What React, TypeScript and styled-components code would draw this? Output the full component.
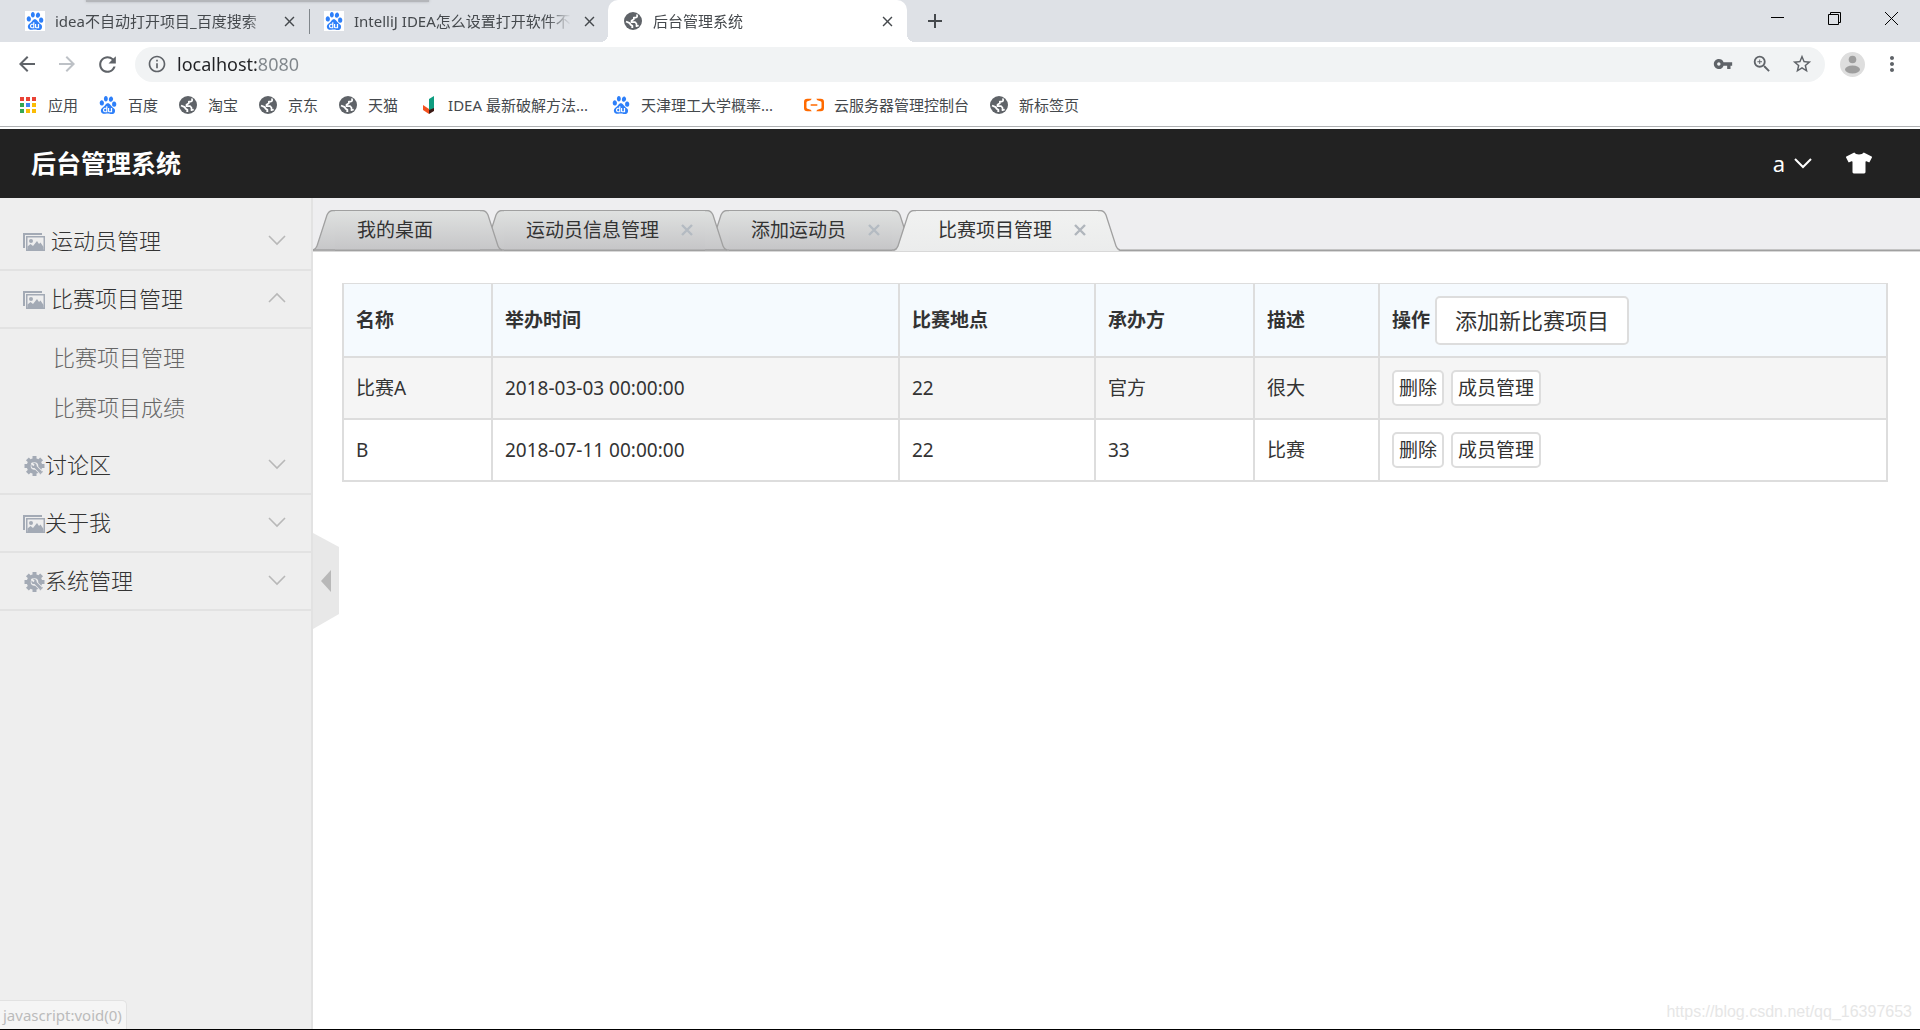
import React from 'react';
import styled, { createGlobalStyle } from 'styled-components';
import {
  MdArrowBack,
  MdArrowForward,
  MdClose,
  MdInfoOutline,
  MdMoreVert,
  MdRefresh,
  MdStarBorder,
  MdVpnKey,
  MdZoomIn,
  MdAdd,
} from 'react-icons/md';
import { SiAlibabacloud, SiBaidu } from 'react-icons/si';
import { FaTshirt } from 'react-icons/fa';

const sans = `'Noto Sans', 'Noto Sans CJK SC', sans-serif`;

const GlobalStyle = createGlobalStyle`
  *, *::before, *::after { box-sizing: border-box; }
  body { margin: 0; background: #fff; color: #333; font-family: ${sans}; }
  button, input { font: inherit; color: inherit; }
  button { padding: 0; border: 0; background: none; cursor: pointer; }
  a { color: inherit; text-decoration: none; }
  svg { display: block; flex: none; }
`;

const Screen = styled.div`
  position: relative;
  display: flex;
  flex-direction: column;
  height: 100vh;
  overflow: hidden;
  border-bottom: 1px solid #000;
`;

/* ---------- browser window ---------- */

const TabStrip = styled.div`
  position: relative;
  display: flex;
  height: 42px;
  background: #dee1e6;
  color: #45494d;
`;

const WindowShadow = styled.div`
  position: absolute;
  left: 86px;
  top: -4px;
  width: 343px;
  height: 6px;
  background: #b4b6ba;
  box-shadow: 0 0 3px #b4b6ba;
`;

const BrowserTab = styled.div<{ $active?: boolean; $divider?: boolean }>`
  position: relative;
  display: flex;
  align-items: center;
  gap: 10px;
  width: 299px;
  padding: 0 11px 0 15px;
  border-radius: 10px 10px 0 0;
  font-size: 15px;
  background: ${p => (p.$active ? '#fff' : 'transparent')};

  ${p =>
    p.$divider &&
    `&::after {
      content: '';
      position: absolute;
      right: -1px;
      top: 9px;
      width: 1px;
      height: 25px;
      background: #80868b;
    }`}

  ${p =>
    p.$active &&
    `&::before, &::after {
      content: '';
      position: absolute;
      bottom: 0;
      width: 8px;
      height: 8px;
    }
    &::before { left: -8px; background: radial-gradient(circle at 0 0, transparent 8px, #fff 8px); }
    &::after { right: -8px; background: radial-gradient(circle at 100% 0, transparent 8px, #fff 8px); }`}
`;

const TabLabel = styled.span`
  flex: 1;
  white-space: nowrap;
  line-height: 24px;
  mask-image: linear-gradient(90deg, #000 calc(100% - 24px), transparent);
`;

const Tabs = styled.div`
  display: flex;
  padding-left: 10px;
`;

const Favicon = styled.span<{ $plain?: boolean }>`
  display: grid;
  place-items: center;
  width: 20px;
  height: 20px;
  flex: none;
  background: ${p => (p.$plain ? 'none' : '#fff')};
`;

const IconButton = styled.button`
  display: grid;
  place-items: center;
  flex: none;
`;

const NewTab = styled(IconButton)`
  margin-left: 16px;
`;

const WindowButtons = styled.div`
  display: flex;
  margin-left: auto;
`;

const WindowButton = styled(IconButton)`
  width: 57px;
  height: 37px;
  color: #000;
`;

const Toolbar = styled.div`
  display: flex;
  align-items: center;
  height: 44px;
  padding: 0 16px 0 15px;
  color: #5f6368;
`;

const NavButtons = styled.div`
  display: flex;
  gap: 16px;
  padding-right: 15px;
`;

const Omnibox = styled.div`
  display: flex;
  align-items: center;
  flex: 1;
  height: 35px;
  padding: 0 12px;
  border-radius: 18px;
  background: #f1f3f4;
`;

const Address = styled.input`
  flex: 1;
  min-width: 0;
  margin-left: 10px;
  padding: 0;
  border: 0;
  outline: 0;
  font-size: 18px;
  color: #202124;
  background: linear-gradient(90deg, #202124 80px, #80868b 80px);
  -webkit-background-clip: text;
  background-clip: text;
  -webkit-text-fill-color: transparent;
`;

const OmniActions = styled.div`
  display: flex;
  gap: 18px;
`;

const Avatar = styled(IconButton)`
  margin: 0 15px;
`;

const BookmarkBar = styled.nav`
  display: flex;
  align-items: center;
  gap: 20px;
  height: 43px;
  padding: 0 18px 4px;
  border-bottom: 2px solid #fff;
  box-shadow: inset 0 -1px #b0b2b4;
  font-size: 15px;
  color: #45494d;
`;

const Bookmark = styled.a<{ $clipped?: boolean }>`
  display: flex;
  align-items: center;
  gap: 10px;
  width: ${p => (p.$clipped ? '173px' : 'auto')};
  white-space: nowrap;
`;

/* ---------- application ---------- */

const Header = styled.header`
  display: flex;
  align-items: center;
  justify-content: space-between;
  height: 69px;
  flex: none;
  padding: 0 48px 2px 31px;
  background: #222;
  color: #fff;
`;

const Title = styled.h1`
  margin: 0;
  font-size: 25px;
  line-height: 36px;
`;

const HeaderTools = styled.div`
  display: flex;
  align-items: center;
  gap: 34px;
`;

const UserButton = styled.button`
  display: flex;
  align-items: center;
  gap: 9px;
  font-size: 22px;
  line-height: 30px;
`;

const Workspace = styled.div`
  display: flex;
  flex: 1;
  min-height: 0;
`;

const Sidebar = styled.nav`
  width: 313px;
  flex: none;
  padding-top: 15px;
  border-right: 2px solid #e2e2e2;
  background: #eee;
  font-size: 22px;
  font-weight: 300;
`;

const MenuItem = styled.button<{ $spaced?: boolean }>`
  display: flex;
  align-items: center;
  width: 100%;
  height: 58px;
  padding: 0 25px 2px 23px;
  border-bottom: 2px solid #e2e2e2;
  text-align: left;

  span {
    flex: 1;
    padding: 0 0 2px ${p => (p.$spaced ? '6px' : '0')};
  }
`;

const MenuIcon = styled.i`
  padding-top: 4px;
`;

const SubMenu = styled.div`
  display: flex;
  flex-direction: column;
  padding: 3px 0 5px 53px;
  color: #666;
`;

const SubLink = styled.a`
  line-height: 50px;
`;

const Main = styled.main`
  position: relative;
  flex: 1;
  min-width: 0;
`;

const PageTabs = styled.div`
  display: flex;
  align-items: flex-end;
  height: 54px;
  background: linear-gradient(#eeeef0 51px, #c4c4c4 51px 52px, #a0a0a0 52px 53px, #d8d8d8 53px);
`;

const PageTab = styled.div`
  position: relative;
  display: flex;
  height: 42px;
  margin-right: -20px;
  font-size: 19px;
`;

const TabBody = styled.div<{ $active?: boolean; $closable: boolean }>`
  display: flex;
  align-items: center;
  gap: 22px;
  height: 42px;
  padding: 0 ${p => (p.$closable ? '12px' : '47px')} 3px 22px;
  border-top: 1px solid #a0a0a0;
  background: ${p =>
    p.$active
      ? 'linear-gradient(#f1f2f1, #ebecec 40px, #d8d8d8 40px)'
      : 'linear-gradient(#dfe1e0, #c6c6c8 38px, #a0a0a0 39px, #a0a0a0 40px, #d8d8d8 40px)'};
`;

const TabButton = styled.button`
  line-height: 28px;
  white-space: nowrap;
`;

const Content = styled.section`
  padding: 31px 32px 31px 29px;
`;

const Table = styled.table`
  width: 100%;
  table-layout: fixed;
  border-collapse: separate;
  border-spacing: 0;
  border-top: 1px solid #ddd;
  border-left: 2px solid #ddd;
  font-size: 19px;
  line-height: 28px;
`;

const Col = styled.col<{ $w?: number }>`
  width: ${p => (p.$w ? `${p.$w}px` : 'auto')};
`;

const Row = styled.tr<{ $shade?: boolean }>`
  background: ${p => (p.$shade ? '#f5f5f5' : '#fff')};
`;

const HeadCell = styled.th`
  height: 74px;
  padding: 0 12px;
  border-right: 2px solid #ddd;
  border-bottom: 2px solid #ddd;
  background: #f5fafe;
  text-align: left;
`;

const Cell = styled.td`
  height: 62px;
  padding: 0 12px;
  border-right: 2px solid #ddd;
  border-bottom: 2px solid #ddd;
`;

const Actions = styled.div<{ $tight?: boolean }>`
  display: flex;
  align-items: center;
  gap: ${p => (p.$tight ? '5px' : '7px')};
`;

const OutlineButton = styled.button<{ $large?: boolean }>`
  height: ${p => (p.$large ? '49px' : '36px')};
  padding: 0 ${p => (p.$large ? '18px' : '5px')};
  border: 2px solid #ddd;
  border-radius: 5px;
  background: #fff;
  font-size: ${p => (p.$large ? '22px' : '19px')};
  font-weight: 400;
  line-height: 28px;
  white-space: nowrap;
`;

const Collapse = styled.button`
  position: absolute;
  left: 0;
  top: 335px;
`;

const StatusBubble = styled.div`
  position: absolute;
  left: 0;
  bottom: 0;
  padding: 2px 4px 1px 3px;
  border: solid #e2e2e2;
  border-width: 1px 1px 0 0;
  border-radius: 0 5px 0 0;
  background: #f5f5f5;
  color: #bbb;
  font-size: 15px;
  line-height: 25px;
`;

const Watermark = styled.div`
  position: absolute;
  right: 8px;
  bottom: 6px;
  font: 16px/22px 'Liberation Sans', sans-serif;
  color: #e6e6e6;
`;

/* ---------- drawings ---------- */

const Chevron = ({ up, color = '#b8b8b8', width = 1.6 }: { up?: boolean; color?: string; width?: number }) => (
  <svg width="18" height="12" viewBox="0 0 18 12" fill="none" stroke={color} strokeWidth={width}>
    <path d={up ? 'M1 10 9 2l8 8' : 'M1 2l8 8 8-8'} />
  </svg>
);

const PictureIcon = () => (
  <svg width="22" height="18" viewBox="0 0 22 18" fill="#a3aab5">
    <path d="M0 0h19v2H2v13H0z" />
    <path fillRule="evenodd" d="M3 3h19v15H3zM4.500 4.500v12h16v-12z" />
    <circle cx="8" cy="8" r="2" />
    <path d="M4.500 17v-3.500l3-2.500 2.500 2 4-5 2 3 1.500-1.500 3 4.500v3z" />
  </svg>
);

const GearIcon = () => (
  <svg width="22" height="20" viewBox="0 0 22 20" fill="none">
    <circle cx="11.500" cy="10" r="5.800" stroke="#a3aab5" strokeWidth="4" />
    <g stroke="#a3aab5" strokeWidth="4">
      <path d="M11.500 0v4M11.500 16v4M1.500 10h4M17.500 10h4M4.400 2.900l3 3M15.600 14.100l3 3M4.400 17.100l3-3M15.600 5.900l3-3" />
    </g>
    <path d="M11 9.500l7 7" stroke="#eee" strokeWidth="4.400" />
    <path d="M11 9.500l7 7" stroke="#a3aab5" strokeWidth="2.800" />
    <circle cx="11" cy="9.500" r="2.600" fill="#a3aab5" />
    <path d="M8.500 7l2.500 2.500" stroke="#eee" strokeWidth="1.800" />
  </svg>
);

const AppsIcon = () => (
  <svg width="16" height="16" viewBox="0 0 16 16">
    {['#ea4335', '#ea4335', '#ea4335', '#34a853', '#4285f4', '#fbbc05', '#34a853', '#fbbc05', '#fbbc05'].map((c, i) => (
      <rect key={i} x={(i % 3) * 6} y={Math.floor(i / 3) * 6} width="4" height="4" fill={c} />
    ))}
  </svg>
);

const BookIcon = () => (
  <svg width="13" height="18" viewBox="0 0 13 18">
    <path d="M7 3l5-3v13l-5 3z" fill="#0f9d80" />
    <path d="M1 9l6 4v5l-6-4z" fill="#f4511e" />
    <path d="M7 14l5-2v3l-5 3z" fill="#3c1a14" />
  </svg>
);

const Baidu = () => <SiBaidu size={18} color="#2d7ff9" />;

const Globe = () => (
  <svg width="18" height="18" viewBox="0 0 18 18">
    <circle cx="9" cy="9" r="9" fill="#5f6368" />
    <g fill="none" stroke="#fff" strokeLinejoin="round">
      <path d="M12.500 2.500c1.500 1.500.5 3-1 3.200H9.800v1.600L7.500 8.800v1.400h3.700l1.300 1.500v2.500l2.200-.7" strokeWidth="1.700" />
      <path d="M2 9.500l3.700 1.700 1 1.600 1.600 1v2.200" strokeWidth="1.900" />
    </g>
  </svg>
);

const TabCap = ({ active, right }: { active?: boolean; right?: boolean }) => {
  const id = `cap-${active ? 'on' : 'off'}-${right ? 'r' : 'l'}`;
  return (
    <svg width="22" height="42" viewBox="0 0 22 42">
      <defs>
        <linearGradient id={id} x1="0" y1="0" x2="0" y2="1">
          <stop offset="0" stopColor={active ? '#f1f2f1' : '#dfe1e0'} />
          <stop offset="1" stopColor={active ? '#ebecec' : '#c6c6c8'} />
        </linearGradient>
      </defs>
      <g transform={right ? 'translate(22 0) scale(-1 1)' : undefined}>
        <path d="M0 41Q3 40 4 37L14 5Q16 .5 20 .5H22V41z" fill={`url(#${id})`} />
        <path d="M0 40Q3 39 4 36L14 5Q16 .5 20 .5H22" fill="none" stroke="#a0a0a0" strokeWidth="1.300" />
        {active ? null : <path d="M0 40H22" stroke="#a0a0a0" strokeWidth="1.500" />}
        <path d="M0 41.500H22" stroke="#d8d8d8" />
      </g>
    </svg>
  );
};

const CloseMark = ({ active }: { active?: boolean }) => (
  <svg width="12" height="12" viewBox="0 0 12 12" stroke={active ? '#b0b6bc' : '#b4bbc2'} strokeWidth="2.400">
    <path d="M1 1l10 10M11 1L1 11" />
  </svg>
);

/* ---------- data ---------- */

const bookmarks = [
  { label: '应用', icon: <AppsIcon /> },
  { label: '百度', icon: <Baidu /> },
  { label: '淘宝', icon: <Globe /> },
  { label: '京东', icon: <Globe /> },
  { label: '天猫', icon: <Globe /> },
  { label: 'IDEA 最新破解方法...', icon: <BookIcon />, clipped: true },
  { label: '天津理工大学概率...', icon: <Baidu />, clipped: true },
  { label: '云服务器管理控制台', icon: <SiAlibabacloud size={20} color="#ff6a00" /> },
  { label: '新标签页', icon: <Globe /> },
];

const menu = [
  { label: '运动员管理', icon: <PictureIcon />, spaced: true },
  {
    label: '比赛项目管理',
    icon: <PictureIcon />,
    spaced: true,
    children: ['比赛项目管理', '比赛项目成绩'],
  },
  { label: '讨论区', icon: <GearIcon /> },
  { label: '关于我', icon: <PictureIcon /> },
  { label: '系统管理', icon: <GearIcon /> },
];

const pageTabs = [
  { label: '我的桌面', closable: false },
  { label: '运动员信息管理', closable: true },
  { label: '添加运动员', closable: true },
  { label: '比赛项目管理', closable: true, active: true },
];

const columns = ['名称', '举办时间', '比赛地点', '承办方', '描述'];
const widths = [149, 407, 196, 159, 125];

const events = [
  ['比赛A', '2018-03-03 00:00:00', '22', '官方', '很大'],
  ['B', '2018-07-11 00:00:00', '22', '33', '比赛'],
];

export default function App() {
  return (
    <Screen>
      <GlobalStyle />
      <TabStrip>
        <WindowShadow />
        <Tabs>
          <BrowserTab $divider>
            <Favicon><Baidu /></Favicon>
            <TabLabel>idea不自动打开项目_百度搜索</TabLabel>
            <IconButton aria-label="关闭标签页"><MdClose size={17} /></IconButton>
          </BrowserTab>
          <BrowserTab>
            <Favicon><Baidu /></Favicon>
            <TabLabel>IntelliJ IDEA怎么设置打开软件不</TabLabel>
            <IconButton aria-label="关闭标签页"><MdClose size={17} /></IconButton>
          </BrowserTab>
          <BrowserTab $active>
            <Favicon $plain><Globe /></Favicon>
            <TabLabel>后台管理系统</TabLabel>
            <IconButton aria-label="关闭标签页"><MdClose size={17} /></IconButton>
          </BrowserTab>
        </Tabs>
        <NewTab aria-label="新标签页"><MdAdd size={24} /></NewTab>
        <WindowButtons>
          <WindowButton aria-label="最小化">
            <svg width="13" height="13" stroke="currentColor"><path d="M0 5.500h13" /></svg>
          </WindowButton>
          <WindowButton aria-label="还原">
            <svg width="13" height="13" fill="none" stroke="currentColor">
              <path d="M.5 2.500h10v10H.5zM2.500 2.500v-2h10v10h-2" />
            </svg>
          </WindowButton>
          <WindowButton aria-label="关闭">
            <svg width="13" height="13" stroke="currentColor"><path d="M0 0l13 13M13 0L0 13" /></svg>
          </WindowButton>
        </WindowButtons>
      </TabStrip>

      <Toolbar>
        <NavButtons>
          <IconButton aria-label="后退"><MdArrowBack size={24} /></IconButton>
          <IconButton aria-label="前进"><MdArrowForward size={24} color="#bdc1c6" /></IconButton>
          <IconButton aria-label="重新加载"><MdRefresh size={25} /></IconButton>
        </NavButtons>
        <Omnibox>
          <MdInfoOutline size={20} />
          <Address aria-label="地址" defaultValue="localhost:8080" />
          <OmniActions>
            <IconButton aria-label="密码"><MdVpnKey size={20} /></IconButton>
            <IconButton aria-label="缩放"><MdZoomIn size={22} /></IconButton>
            <IconButton aria-label="收藏"><MdStarBorder size={22} /></IconButton>
          </OmniActions>
        </Omnibox>
        <Avatar aria-label="用户">
          <svg width="25" height="25" viewBox="0 0 25 25">
            <circle cx="12.500" cy="12.500" r="12.500" fill="#dedede" />
            <circle cx="12.500" cy="7.500" r="3.800" fill="#9e9e9e" />
            <ellipse cx="12.500" cy="17.500" rx="7.500" ry="4" fill="#9e9e9e" />
          </svg>
        </Avatar>
        <IconButton aria-label="菜单"><MdMoreVert size={24} /></IconButton>
      </Toolbar>

      <BookmarkBar aria-label="书签">
        {bookmarks.map(b => (
          <Bookmark key={b.label} href="#" $clipped={b.clipped}>
            <Favicon $plain>{b.icon}</Favicon>
            <span>{b.label}</span>
          </Bookmark>
        ))}
      </BookmarkBar>

      <Header>
        <Title>后台管理系统</Title>
        <HeaderTools>
          <UserButton>
            a <Chevron color="#fff" width={2} />
          </UserButton>
          <IconButton aria-label="皮肤"><FaTshirt size={26} /></IconButton>
        </HeaderTools>
      </Header>

      <Workspace>
        <Sidebar>
          {menu.map(m => (
            <React.Fragment key={m.label}>
              <MenuItem $spaced={m.spaced}>
                <MenuIcon>{m.icon}</MenuIcon>
                <span>{m.label}</span>
                <Chevron up={!!m.children} />
              </MenuItem>
              {m.children && (
                <SubMenu>
                  {m.children.map(c => <SubLink key={c} href="#">{c}</SubLink>)}
                </SubMenu>
              )}
            </React.Fragment>
          ))}
        </Sidebar>

        <Main>
          <PageTabs>
            {pageTabs.map((t, i) => (
              <PageTab key={t.label} style={{ zIndex: t.active ? 9 : 4 - i }}>
                <TabCap active={t.active} />
                <TabBody $active={t.active} $closable={t.closable}>
                  <TabButton>{t.label}</TabButton>
                  {t.closable && (
                    <IconButton aria-label="关闭"><CloseMark active={t.active} /></IconButton>
                  )}
                </TabBody>
                <TabCap active={t.active} right />
              </PageTab>
            ))}
          </PageTabs>

          <Content>
            <Table>
              <colgroup>
                {widths.map((w, i) => <Col key={i} $w={w} />)}
                <Col />
              </colgroup>
              <thead>
                <tr>
                  {columns.map(c => <HeadCell key={c}>{c}</HeadCell>)}
                  <HeadCell>
                    <Actions $tight>
                      操作 <OutlineButton $large>添加新比赛项目</OutlineButton>
                    </Actions>
                  </HeadCell>
                </tr>
              </thead>
              <tbody>
                {events.map((e, i) => (
                  <Row key={e[0]} $shade={i % 2 === 0}>
                    {e.map((v, j) => <Cell key={j}>{v}</Cell>)}
                    <Cell>
                      <Actions>
                        <OutlineButton>删除</OutlineButton>
                        <OutlineButton>成员管理</OutlineButton>
                      </Actions>
                    </Cell>
                  </Row>
                ))}
              </tbody>
            </Table>
          </Content>

          <Collapse aria-label="收起菜单">
            <svg width="26" height="96" viewBox="0 0 26 96">
              <path d="M0 0l26 14v67L0 96z" fill="#e8e8e8" />
              <path d="M18 37v22L8 48z" fill="#b8b8b8" />
            </svg>
          </Collapse>
        </Main>
      </Workspace>

      <StatusBubble>javascript:void(0)</StatusBubble>
      <Watermark>https://blog.csdn.net/qq_16397653</Watermark>
    </Screen>
  );
}
